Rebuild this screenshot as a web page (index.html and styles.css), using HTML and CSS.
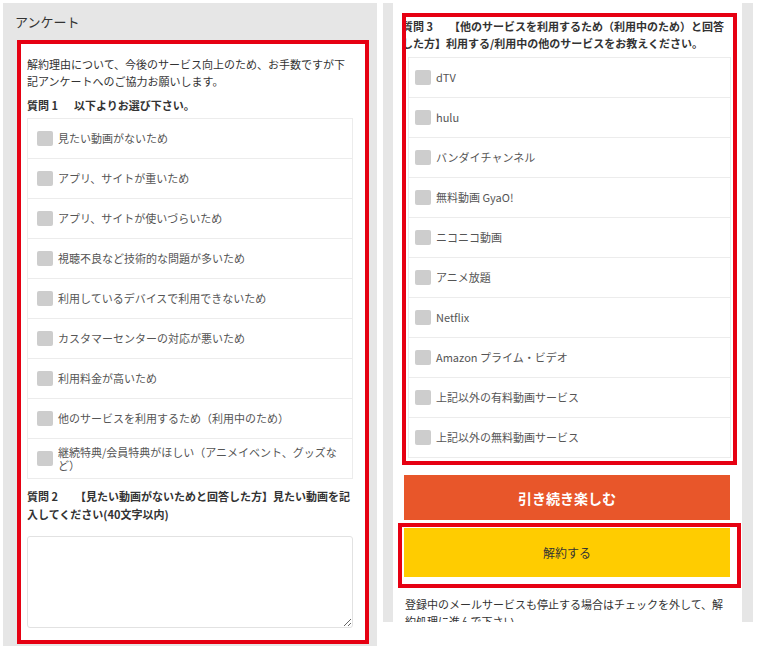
FILE: index.html
```html
<!DOCTYPE html>
<html lang="ja">
<head>
    <meta charset="UTF-8">
    <meta name="viewport" content="width=device-width, initial-scale=1.0">
    <title>アンケート</title>
    <link rel="stylesheet" href="styles.css">
</head>
<body>
    <div class="page">
        <div class="panel survey">
            <h2 class="panel-title">アンケート</h2>
            <div class="card">
                <p class="lead">解約理由について、今後のサービス向上のため、お手数ですが下記アンケートへのご協力お願いします。</p>
                <p class="question"><span class="qno">質問 1</span>以下よりお選び下さい。</p>
                <ul class="choices">
                    <li><span class="check"></span>見たい動画がないため</li>
                    <li><span class="check"></span>アプリ、サイトが重いため</li>
                    <li><span class="check"></span>アプリ、サイトが使いづらいため</li>
                    <li><span class="check"></span>視聴不良など技術的な問題が多いため</li>
                    <li><span class="check"></span>利用しているデバイスで利用できないため</li>
                    <li><span class="check"></span>カスタマーセンターの対応が悪いため</li>
                    <li><span class="check"></span>利用料金が高いため</li>
                    <li><span class="check"></span>他のサービスを利用するため（利用中のため）</li>
                    <li><span class="check"></span><span class="label">継続特典/会員特典がほしい（アニメイベント、グッズなど）</span></li>
                </ul>
                <p class="question q2"><span class="qno qno-wide">質問 2</span>【見たい動画がないためと回答した方】見たい動画を記入してください(40文字以内)</p>
                <textarea class="answer"></textarea>
            </div>
        </div>

        <div class="panel services">
            <div class="annot q3">
                <p class="question"><span class="qno">質問 3</span>【他のサービスを利用するため（利用中のため）と回答した方】利用する/利用中の他のサービスをお教えください。</p>
                <ul class="choices">
                    <li><span class="check"></span>dTV</li>
                    <li><span class="check"></span>hulu</li>
                    <li><span class="check"></span>バンダイチャンネル</li>
                    <li><span class="check"></span>無料動画 GyaO!</li>
                    <li><span class="check"></span>ニコニコ動画</li>
                    <li><span class="check"></span>アニメ放題</li>
                    <li><span class="check"></span>Netflix</li>
                    <li><span class="check"></span>Amazon プライム・ビデオ</li>
                    <li><span class="check"></span>上記以外の有料動画サービス</li>
                    <li><span class="check"></span>上記以外の無料動画サービス</li>
                </ul>
            </div>
            <button class="btn btn-keep">引き続き楽しむ</button>
            <div class="annot-around">
                <button class="btn btn-cancel">解約する</button>
            </div>
            <p class="note">登録中のメールサービスも停止する場合はチェックを外して、解約処理に進んで下さい。</p>
        </div>
    </div>
</body>
</html>
```

FILE: styles.css
```css
body {
    margin: 0;
    padding: 0;
    background: #fff;
    color: #333;
    font-family: "Noto Sans CJK JP", sans-serif;
}
.page {
    display: flex;
    align-items: flex-start;
    gap: 6px;
    padding: 3px 0 0 3px;
}
.panel {
    box-sizing: border-box;
}
.survey {
    width: 374px;
    height: 643px;
    background: #e6e6e6;
    padding: 10px 8px 3px 12px;
}
.panel-title {
    margin: 0 0 9px 0;
    font-size: 13px;
    line-height: 18px;
    font-weight: normal;
    color: #333;
}
.card {
    margin-left: 2px;
    background: #fff;
    border: 4px solid #e60012;
    padding: 12px 12px 12px 6px;
}
.lead {
    margin: 0;
    font-size: 11px;
    line-height: 17px;
}
.question {
    margin: 7px 0 0 0;
    font-size: 11px;
    line-height: 17px;
    font-weight: bold;
    color: #333;
}
.question.q2 {
    margin-top: 8px;
    line-height: 18px;
}
.qno {
    margin-right: 16px;
}
.qno-wide {
    margin-right: 17px;
}
.choices {
    list-style: none;
    margin: 4px 0 0 0;
    padding: 0;
    border: 1px solid #ececec;
    border-top: none;
}
.choices li {
    box-sizing: border-box;
    height: 40px;
    display: flex;
    align-items: center;
    gap: 5px;
    padding: 0 8px 0 9px;
    border-top: 1px solid #ececec;
    font-size: 11px;
    line-height: 13px;
    color: #555;
}
.check {
    flex: none;
    width: 16px;
    height: 15px;
    border-radius: 2px;
    background: #cdcdcd;
}
.answer {
    display: block;
    box-sizing: border-box;
    width: 100%;
    height: 92px;
    margin-top: 13px;
    border: 1px solid #e2e2e2;
    border-radius: 3px;
    resize: vertical;
}

/* right column */
.services {
    width: 370px;
    height: 619px;
    overflow: hidden;
    background: #fff;
    border-left: 10px solid #e6e6e6;
    border-right: 11px solid #e6e6e6;
    padding: 10px 5px 0 9px;
}
.annot {
    position: relative;
    padding: 5px 6px 7px 0;
}
.annot::after,
.annot-around::after {
    content: '';
    position: absolute;
    border: 4px solid #e60012;
    pointer-events: none;
}
.annot::after {
    top: 0;
    left: 0;
    right: 0;
    bottom: 0;
}
.q3 .question {
    margin: 0;
}
.q3 .choices {
    margin: 5px 0 0 6px;
}
.q3 .choices li {
    padding-left: 6px;
}
.btn {
    display: block;
    width: 100%;
    border: none;
    border-radius: 0;
    font-family: inherit;
    cursor: pointer;
}
.btn-keep {
    width: 326px;
    height: 45px;
    margin: 10px 0 0 2px;
    background: #e8562a;
    color: #fff;
    font-size: 14px;
    font-weight: bold;
}
.annot-around {
    position: relative;
    width: 326px;
    margin: 8px 0 0 2px;
}
.annot-around::after {
    top: -5px;
    left: -6px;
    right: -11px;
    bottom: -11px;
}
.btn-cancel {
    height: 49px;
    background: #ffcc00;
    color: #333;
    font-size: 12px;
}
.btn-keep:hover {
    background: #f0683d;
}
.note {
    width: 325px;
    margin: 19px 0 0 3px;
    font-size: 11px;
    line-height: 17px;
    color: #333;
}
```
